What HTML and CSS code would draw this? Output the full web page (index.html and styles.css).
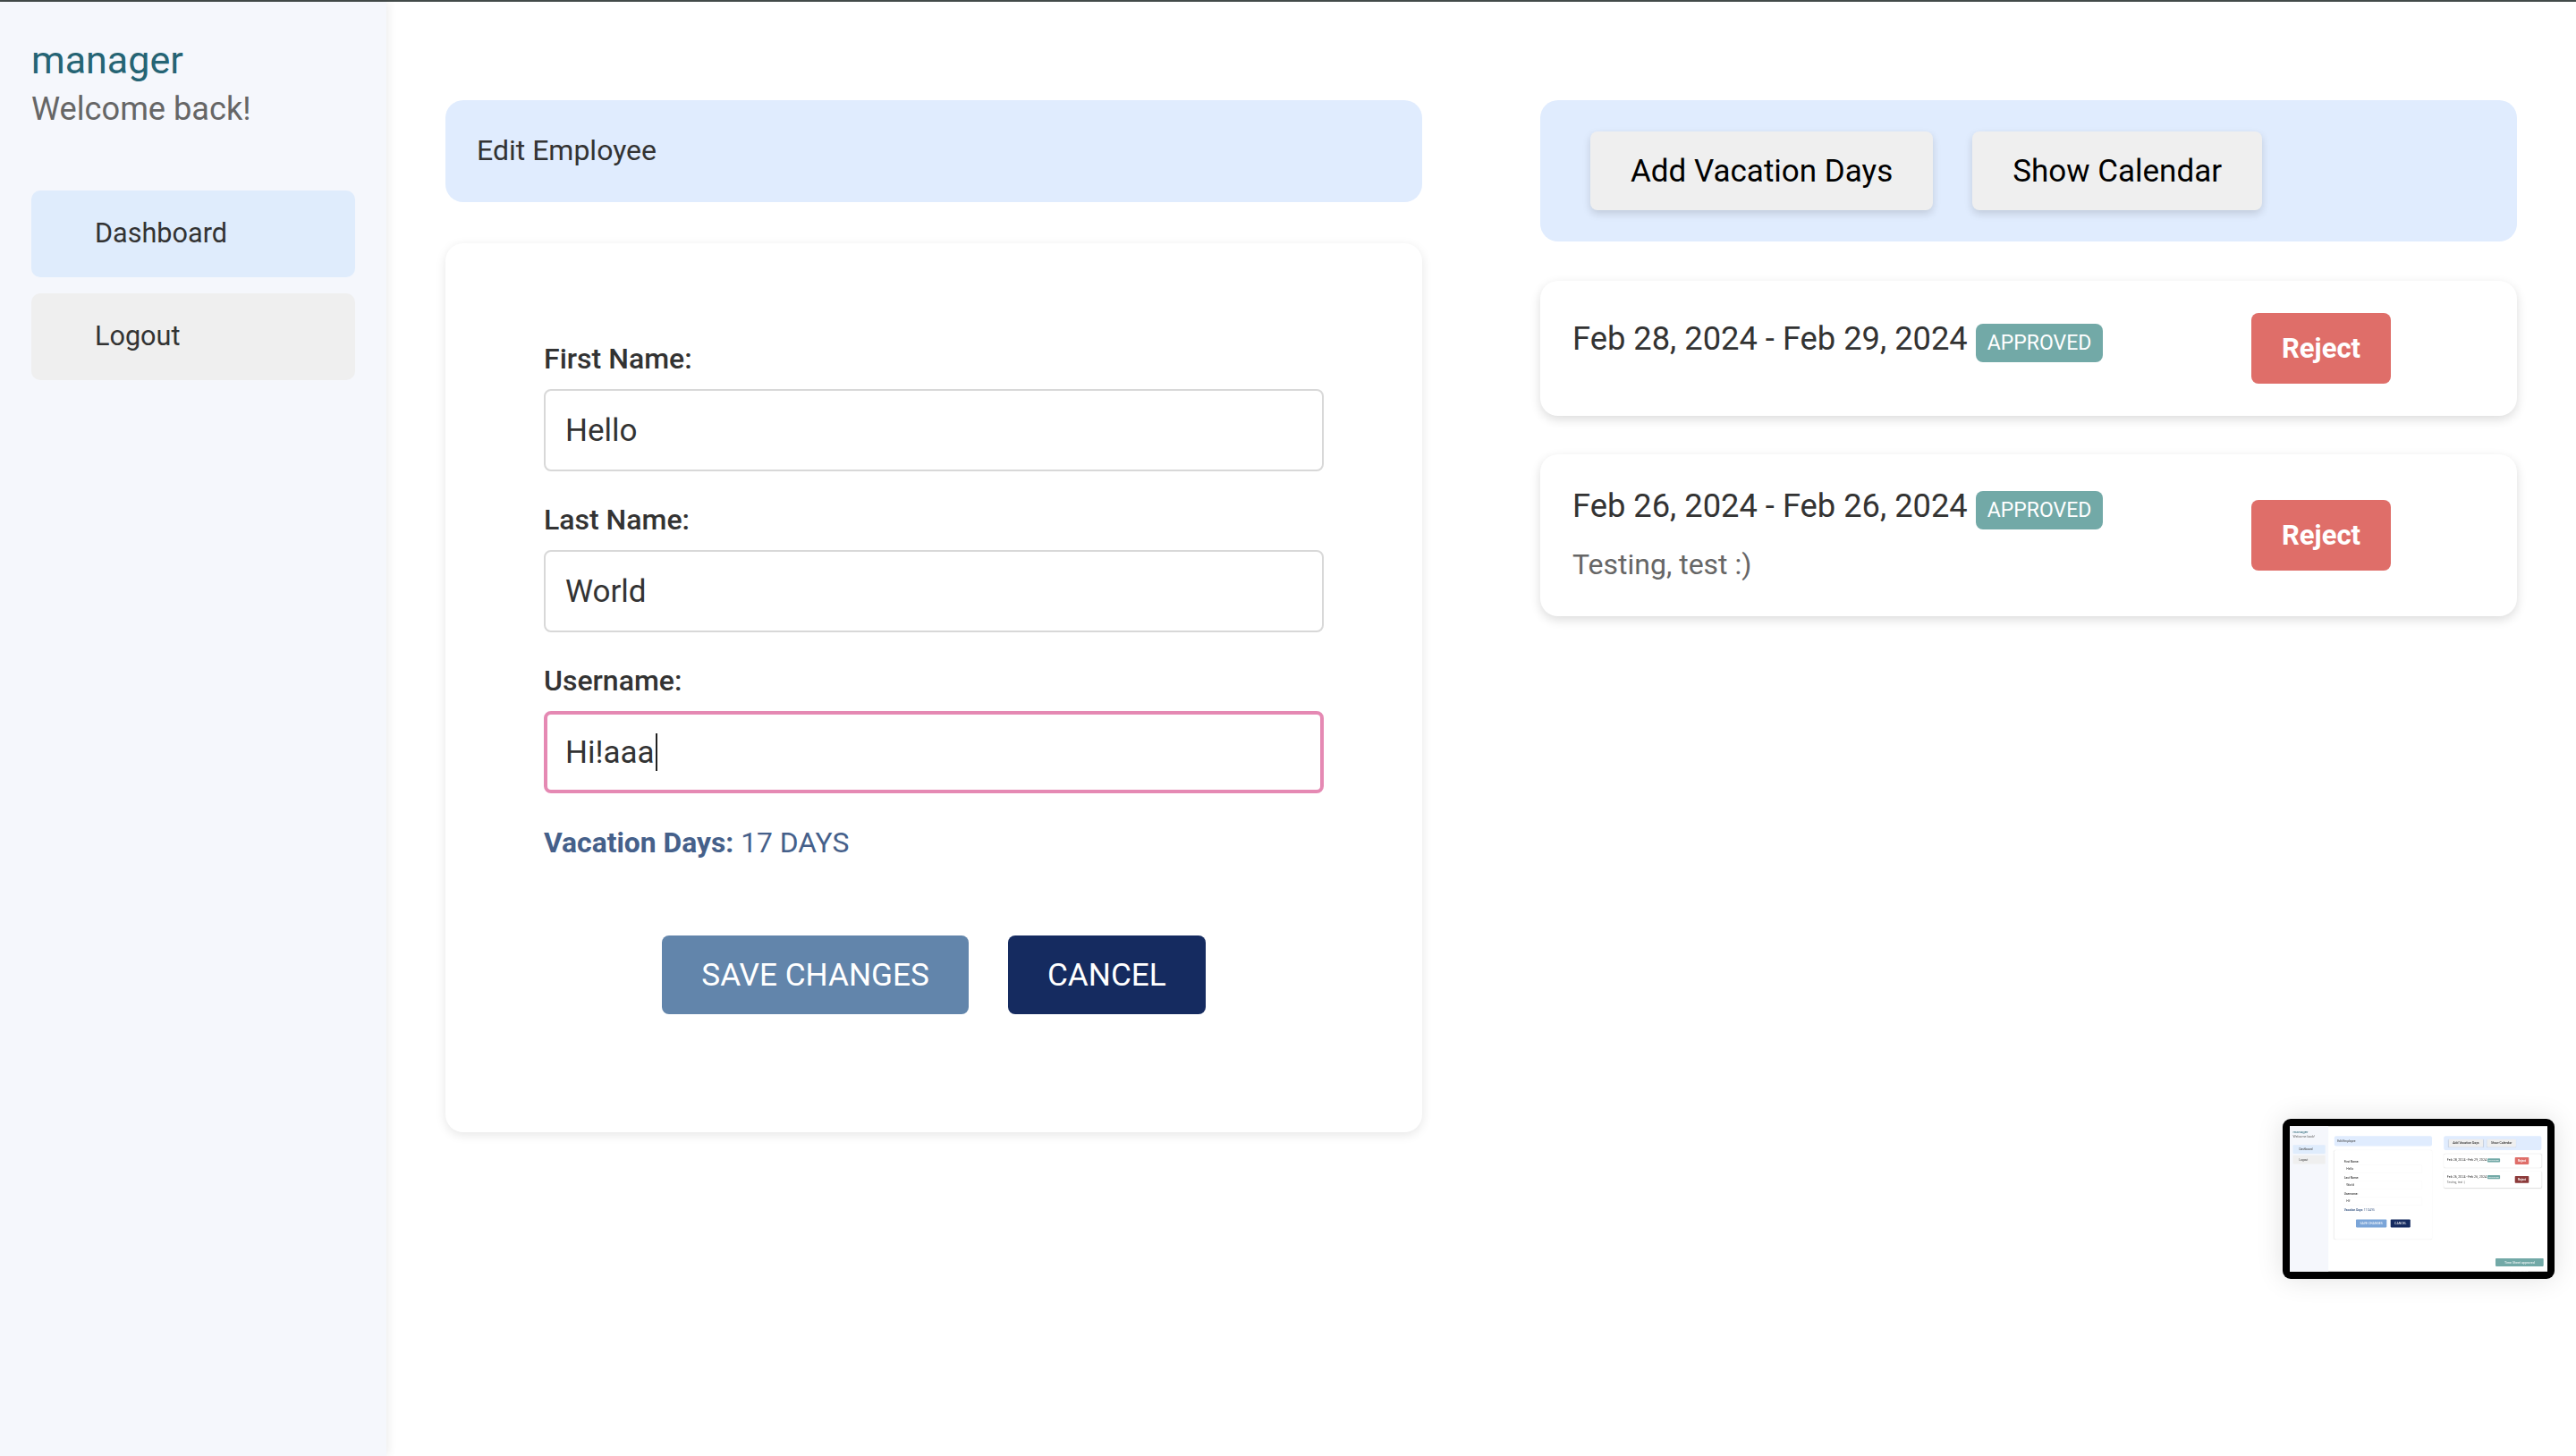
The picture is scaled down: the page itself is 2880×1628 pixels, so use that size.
FILE: index.html
```html
<!DOCTYPE html>
<html lang="en">

<head>
    <meta charset="UTF-8">
    <meta name="viewport" content="width=device-width, initial-scale=1.0">
    <title>Edit Employee</title>
    <link rel="stylesheet" href="styles.css">
</head>

<body>

    <div class="app">
        <!-- Sidebar -->
        <aside class="sidebar">
            <div class="user-name">manager</div>
            <div class="user-welcome">Welcome back!</div>
            <nav class="nav">
                <a class="nav-item active">Dashboard</a>
                <a class="nav-item">Logout</a>
            </nav>
        </aside>

        <main class="main">
            <!-- Edit form -->
            <section>
                <div class="panel-head">Edit Employee</div>
                <div class="form-card">
                    <div class="label">First Name:</div>
                    <div class="field">Hello</div>
                    <div class="label">Last Name:</div>
                    <div class="field">World</div>
                    <div class="label">Username:</div>
                    <div class="field focused">Hi!aaa<span class="caret"></span></div>
                    <div class="vacation"><b>Vacation Days:</b> 17 DAYS</div>
                    <div class="form-actions">
                        <button class="btn btn-save">SAVE CHANGES</button>
                        <button class="btn btn-cancel">CANCEL</button>
                    </div>
                </div>
            </section>

            <!-- Time sheets -->
            <section>
                <div class="panel-head tools">
                    <button class="tool-btn">Add Vacation Days</button>
                    <button class="tool-btn">Show Calendar</button>
                </div>
                <div class="sheet">
                    <div>
                        <div class="sheet-dates">Feb 28, 2024 - Feb 29, 2024 <span class="badge">APPROVED</span></div>
                    </div>
                    <button class="reject">Reject</button>
                </div>
                <div class="sheet">
                    <div>
                        <div class="sheet-dates">Feb 26, 2024 - Feb 26, 2024 <span class="badge">APPROVED</span></div>
                        <div class="sheet-note">Testing, test :)</div>
                    </div>
                    <button class="reject">Reject</button>
                </div>
            </section>
        </main>
    </div>

    <!-- Screenshot preview, same page at 1/10 size -->
    <div class="preview">
        <div class="preview-screen">
            <div class="app">
                <aside class="sidebar">
                    <div class="user-name">manager</div>
                    <div class="user-welcome">Welcome back!</div>
                    <nav class="nav">
                        <a class="nav-item active">Dashboard</a>
                        <a class="nav-item">Logout</a>
                    </nav>
                </aside>
                <main class="main">
                    <section>
                        <div class="panel-head">Edit Employee</div>
                        <div class="form-card">
                            <div class="label">First Name:</div>
                            <div class="field">Hello</div>
                            <div class="label">Last Name:</div>
                            <div class="field">World</div>
                            <div class="label">Username:</div>
                            <div class="field">Hi!</div>
                            <div class="vacation"><b>Vacation Days:</b> 17 DAYS</div>
                            <div class="form-actions">
                                <button class="btn btn-save">SAVE CHANGES</button>
                                <button class="btn btn-cancel">CANCEL</button>
                            </div>
                        </div>
                    </section>
                    <section>
                        <div class="panel-head tools">
                            <button class="tool-btn">Add Vacation Days</button>
                            <button class="tool-btn">Show Calendar</button>
                        </div>
                        <div class="sheet">
                            <div>
                                <div class="sheet-dates">Feb 28, 2024 - Feb 29, 2024 <span class="badge">APPROVED</span></div>
                            </div>
                            <button class="reject">Reject</button>
                        </div>
                        <div class="sheet">
                            <div>
                                <div class="sheet-dates">Feb 26, 2024 - Feb 26, 2024 <span class="badge">APPROVED</span></div>
                                <div class="sheet-note">Testing, test :)</div>
                            </div>
                            <button class="reject hovered">Reject</button>
                        </div>
                    </section>
                </main>
                <div class="toast">Time Sheet approved successfully!</div>
            </div>
        </div>
    </div>

</body>

</html>
```

FILE: styles.css
```css
/* Global Reset */
* {
    margin: 0;
    padding: 0;
    box-sizing: border-box;
}

/* Body */
html,
body {
    height: 100%;
    overflow: hidden;
}

body {
    font-family: 'Roboto', sans-serif;
    background-color: #fff;
    color: #333;
    position: relative;
}

/* App shell */
.app {
    display: flex;
    width: 2880px;
    height: 1628px;
    border-top: 2px solid #434b4a;
    background: #fff;
    position: relative;
}

/* Sidebar */
.sidebar {
    width: 432px;
    flex-shrink: 0;
    padding: 38px 35px 0;
    background-color: #f5f7fc;
    box-shadow: 2px 0 10px rgba(0, 0, 0, 0.08);
}

.user-name {
    font-size: 43px;
    line-height: 54px;
    color: #256474;
}

.user-welcome {
    margin-top: 2px;
    font-size: 36.2px;
    line-height: 52px;
    color: #666;
}

.nav {
    margin-top: 65px;
    display: flex;
    flex-direction: column;
    gap: 18px;
}

.nav-item {
    display: block;
    height: 97px;
    padding-left: 71px;
    line-height: 96px;
    font-size: 30.6px;
    color: #333;
    background-color: #efefef;
    border-radius: 10px;
}

.nav-item.active {
    background-color: #dfecfc;
}

/* Main */
.main {
    flex: 1;
    display: grid;
    grid-template-columns: 1092px 1092px;
    gap: 132px;
    padding: 110px 66px 0;
    align-items: start;
}

.panel-head {
    height: 114px;
    padding-left: 35px;
    line-height: 112px;
    font-size: 32px;
    color: #333;
    background-color: #e0ecfe;
    border-radius: 20px;
}

/* Form card */
.form-card {
    margin-top: 46px;
    padding: 111px 110px 132px;
    background: #fff;
    border-radius: 20px;
    box-shadow: 0 3px 12px rgba(0, 0, 0, 0.1);
}

.label {
    height: 38px;
    margin-bottom: 14px;
    line-height: 37px;
    font-size: 32px;
    font-weight: 500;
    color: #333;
}

.field {
    height: 92px;
    margin-bottom: 36px;
    padding-left: 22px;
    font-size: 35px;
    color: #333;
    border: 2px solid #d8d8d8;
    border-radius: 8px;
    display: flex;
    align-items: center;
}

.field.focused {
    padding-left: 20px;
    border: 4px solid #e589b3;
}

.caret {
    width: 2px;
    height: 42px;
    margin-left: 1px;
    background-color: #222;
}

.vacation {
    height: 38px;
    line-height: 38px;
    font-size: 31.8px;
    color: #45608a;
}

.form-actions {
    margin-top: 85px;
    display: flex;
    justify-content: center;
    gap: 44px;
}

/* Buttons */
button {
    font-family: 'Roboto', sans-serif;
    border: none;
    cursor: pointer;
}

.btn {
    height: 88px;
    padding: 0 44px;
    font-size: 35.2px;
    color: #fff;
    border-radius: 8px;
}

.btn-save {
    background-color: #6285ab;
}

.btn-cancel {
    background-color: #152b60;
}

/* Time sheet panel */
.tools {
    height: 158px;
    margin-bottom: 44px;
    padding: 35px 56px;
    display: flex;
    gap: 44px;
    align-items: flex-start;
}

.tool-btn {
    height: 88px;
    padding: 0 45px;
    font-size: 35px;
    color: #000;
    background-color: #efefef;
    border-radius: 8px;
    box-shadow: 0 4px 10px rgba(0, 0, 0, 0.14);
}

.sheet {
    margin-bottom: 43px;
    padding: 36px 141px 36px 36px;
    display: flex;
    justify-content: space-between;
    align-items: center;
    background: #fff;
    border-radius: 20px;
    box-shadow: 0 4px 12px rgba(0, 0, 0, 0.14);
}

.sheet-dates {
    height: 44px;
    margin-bottom: 22px;
    line-height: 44px;
    font-size: 36.3px;
    color: #333;
    white-space: nowrap;
}

.badge {
    display: inline-block;
    height: 43px;
    padding: 0 13px;
    line-height: 43px;
    font-size: 23px;
    color: #fff;
    background-color: #72a9a7;
    border-radius: 8px;
}

.sheet-note {
    height: 43px;
    line-height: 43px;
    font-size: 32px;
    color: #666;
}

.reject {
    height: 79px;
    width: 156px;
    font-size: 31px;
    font-weight: 700;
    color: #fff;
    background-color: #df6e69;
    border-radius: 8px;
}

/* Preview thumbnail */
.preview {
    position: absolute;
    left: 2552px;
    top: 1251px;
    width: 304px;
    height: 179px;
    padding: 8px;
    background-color: #000;
    border-radius: 9px;
    box-shadow: 0 0 30px rgba(0, 0, 0, 0.12);
}

.preview-screen {
    width: 288px;
    height: 163px;
    overflow: hidden;
    filter: blur(0.6px);
}

.preview-screen .app {
    transform: scale(0.1);
    transform-origin: top left;
}

.preview-screen .field {
    border-color: #f2f2f2;
}

.preview-screen .btn-save {
    background-color: #7ba5d8;
}

.preview-screen .reject.hovered {
    background-color: #8c3a3a;
}

.toast {
    position: absolute;
    left: 2300px;
    top: 1477px;
    width: 537px;
    height: 90px;
    line-height: 90px;
    text-align: center;
    font-size: 36px;
    color: #fff;
    background-color: #72a9a7;
    border-radius: 8px;
}
```
